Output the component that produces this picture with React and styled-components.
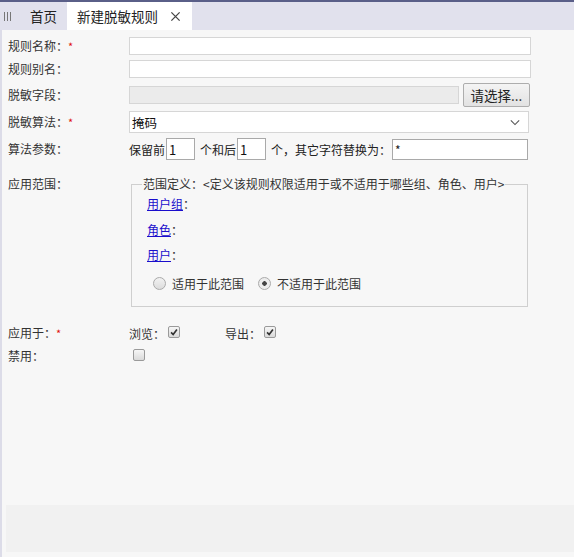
import React from 'react';
import styled, { createGlobalStyle } from 'styled-components';

const Global = createGlobalStyle`
  html, body { margin:0; padding:0; height:100%; }
  body {
    font-family: "Noto Sans CJK SC", "Liberation Sans", sans-serif;
    font-size:12px;
    color:#333;
    background:#f7f7f7;
  }
  #root { height:100%; }
`;

function App() {
  return (
    <Page>
      <Global />
      <TabBar>
        <Grip><i /><i /><i /></Grip>
        <Tab>首页</Tab>
        <Tab active>
          新建脱敏规则
          <Close viewBox="0 0 12 12">
            <path d="M1.5 1.5 L10.5 10.5 M10.5 1.5 L1.5 10.5" />
          </Close>
        </Tab>
      </TabBar>

      <Main>
        <Form>
          <Row h={20}>
            <Label>规则名称：<Req>*</Req></Label>
            <Input />
          </Row>
          <Row h={20} gap={3}>
            <Label>规则别名：</Label>
            <Input />
          </Row>
          <Row h={24} gap={4}>
            <Label>脱敏字段：</Label>
            <Input disabled w={330} />
            <Button>请选择...</Button>
          </Row>
          <Row h={22} gap={4}>
            <Label>脱敏算法：<Req>*</Req></Label>
            <Select>
              掩码
              <Chevron viewBox="0 0 12 8">
                <path d="M1 1.5 L6 6.5 L11 1.5" />
              </Chevron>
            </Select>
          </Row>
          <Row h={24} gap={4}>
            <Label>算法参数：</Label>
            <Params>
              <span>保留前</span>
              <SmallInput value="1" />
              <span>个和后</span>
              <SmallInput value="1" />
              <span>个，其它字符替换为：</span>
              <ReplaceInput defaultValue="*" />
            </Params>
          </Row>

          <ScopeRow>
            <Label>应用范围：</Label>
            <Fieldset>
              <legend>范围定义：&lt;定义该规则权限适用于或不适用于哪些组、角色、用户&gt;</legend>
              <ScopeItem><Link>用户组</Link>：</ScopeItem>
              <ScopeItem><Link>角色</Link>：</ScopeItem>
              <ScopeItem><Link>用户</Link>：</ScopeItem>
              <Radios>
                <RadioLabel><Radio />适用于此范围</RadioLabel>
                <RadioLabel><Radio checked />不适用于此范围</RadioLabel>
              </Radios>
            </Fieldset>
          </ScopeRow>

          <CheckRow>
            <Label>应用于：<Req>*</Req></Label>
            <CheckItem w={96}>浏览：<Check checked /></CheckItem>
            <CheckItem>导出：<Check checked /></CheckItem>
          </CheckRow>
          <CheckRow gap={5}>
            <Label>禁用：</Label>
            <CheckItem pad={1}><Check /></CheckItem>
          </CheckRow>
        </Form>
        <Footer />
      </Main>
    </Page>
  );
}

function Check({ checked }) {
  return (
    <Box>
      {checked && (
        <svg viewBox="0 0 12 12" width="10" height="10">
          <path d="M2.5 6.5 L5 9 L9.5 3" fill="none" stroke="#333" strokeWidth="2" />
        </svg>
      )}
    </Box>
  );
}

export default App;

const Page = styled.div`
  height:557px;
  display:flex;
  flex-direction:column;
  overflow:hidden;
`;

const TabBar = styled.div`
  height:30px;
  box-sizing:border-box;
  background:#e1e1ed;
  border-top:2px solid #5a5f88;
  display:flex;
  align-items:stretch;
`;

const Grip = styled.div`
  width:20px;
  display:flex;
  align-items:center;
  gap:2px;
  padding-left:4px;
  box-sizing:border-box;
  i {
    width:1px;
    height:9px;
    background:#777;
  }
`;

const Tab = styled.div`
  display:flex;
  align-items:center;
  gap:12px;
  padding:0 10px;
  font-size:13.5px;
  color:#222;
  background:${p => (p.active ? '#fff' : 'transparent')};
  ${p => p.active && 'width:125px; box-sizing:border-box;'}
`;

const Close = styled.svg`
  width:11px;
  height:11px;
  path { stroke:#444; stroke-width:1.4; fill:none; }
`;

const Main = styled.div`
  flex:1;
  display:flex;
  flex-direction:column;
  border-left:2px solid #dcdce8;
`;

const Form = styled.div`
  flex:1;
  padding:6px 0 0 6px;
`;

const Row = styled.div`
  display:flex;
  align-items:center;
  height:${p => p.h}px;
  margin-top:${p => p.gap || 0}px;
`;

const Label = styled.div`
  width:121px;
  flex-shrink:0;
  line-height:16px;
`;

const Req = styled.span`
  color:#e01010;
  font-size:11px;
  vertical-align:top;
`;

const Input = styled.input`
  box-sizing:border-box;
  width:${p => (p.w ? p.w + 'px' : '402px')};
  height:18px;
  border:1px solid #d6d6d6;
  background:${p => (p.disabled ? '#ebebeb' : '#fff')};
  font:12px "Noto Sans CJK SC", "Liberation Sans", sans-serif;
  padding:0 2px;
  margin:0;
  outline:none;
  color:#222;
`;

const Button = styled.div`
  box-sizing:border-box;
  margin-left:4px;
  width:67px;
  height:24px;
  border:1px solid #adadad;
  border-radius:2px;
  background:linear-gradient(#f4f4f4, #e2e2e2);
  font-size:13.5px;
  color:#222;
  display:flex;
  align-items:center;
  justify-content:center;
`;

const Select = styled.div`
  box-sizing:border-box;
  width:400px;
  height:22px;
  border:1px solid #d6d6d6;
  background:#fff;
  display:flex;
  align-items:center;
  justify-content:space-between;
  padding:0 8px 0 2px;
  font-size:12.5px;
  color:#111;
`;

const Chevron = styled.svg`
  width:10px;
  height:7px;
  path { stroke:#555; stroke-width:1.3; fill:none; }
`;

const Params = styled.div`
  display:flex;
  align-items:center;
  font-size:12px;
  color:#222;
`;

const SmallInput = styled.input.attrs({ readOnly: true })`
  box-sizing:border-box;
  width:29px;
  height:22px;
  margin:0 5px 0 1px;
  border:1px solid #a9a9a9;
  background:#fff;
  font:13px "Noto Sans CJK SC", "Liberation Sans", sans-serif;
  padding:0 2px;
  outline:none;
  color:#111;
`;

const ReplaceInput = styled.input`
  box-sizing:border-box;
  width:136px;
  height:21px;
  margin-left:1px;
  border:1px solid #a9a9a9;
  background:#fff;
  font:12px "Noto Sans CJK SC", "Liberation Sans", sans-serif;
  padding:0 2px;
  outline:none;
  color:#222;
`;

const ScopeRow = styled.div`
  display:flex;
  align-items:flex-start;
  margin-top:15px;
`;

const Fieldset = styled.fieldset`
  margin:0 0 0 2px;
  box-sizing:border-box;
  width:397px;
  height:131px;
  border:1px solid #cfcfcf;
  padding:4px 0 0 15px;
  legend {
    margin-left:-5px;
    padding:0 1px;
    line-height:16px;
    font-size:12px;
    color:#333;
  }
`;

const ScopeItem = styled.div`
  height:25.5px;
  line-height:16px;
`;

const Link = styled.span`
  color:#1a0dcc;
  text-decoration:underline;
`;

const Radios = styled.div`
  display:flex;
  align-items:center;
  gap:14px;
  padding-left:6px;
  margin-top:2px;
  font-size:12px;
`;

const RadioLabel = styled.label`
  display:flex;
  align-items:center;
  gap:6px;
`;

const Radio = styled.span`
  width:11px;
  height:11px;
  border-radius:50%;
  border:1px solid #aaa;
  background:${p => (p.checked
    ? 'radial-gradient(circle, #444 0 2px, #ececec 2.5px)'
    : 'linear-gradient(#f2f2f2, #dcdcdc)')};
`;

const CheckRow = styled.div`
  display:flex;
  align-items:center;
  height:18px;
  margin-top:${p => p.gap ?? 17}px;
`;

const CheckItem = styled.div`
  display:flex;
  align-items:flex-end;
  width:${p => (p.w ? p.w + 'px' : 'auto')};
  padding-left:${p => p.pad || 0}px;
  line-height:16px;
  padding-top:2px;
`;

const Box = styled.span`
  box-sizing:border-box;
  width:12px;
  height:12px;
  margin:0 0 4px 3px;
  border:1px solid #9a9a9a;
  border-radius:2px;
  background:linear-gradient(#f6f6f6, #dadada);
  display:flex;
  align-items:center;
  justify-content:center;
`;

const Footer = styled.div`
  height:47px;
  margin:0 0 5px 4px;
  background:#f1f1f1;
`;
